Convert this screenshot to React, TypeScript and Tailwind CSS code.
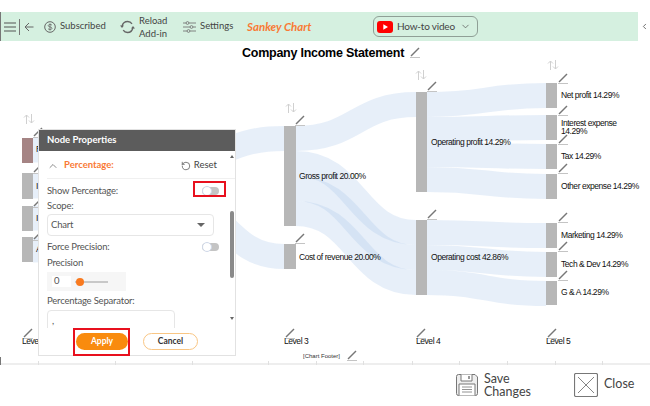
import { ChevronDown, ChevronLeft, ChevronUp, RotateCcw } from "lucide-react";

const CHART_TOP = 41;

const flows = [
  // level 1 -> level 2, mostly under the panel
  [33, 150, 153, 150],
  [33, 186, 153, 176],
  [33, 218, 153, 201],
  [33, 250, 153, 226],
  // level 2 -> level 3
  [165, 163, 284, 138.5],
  [165, 197, 284, 256.5],
  // level 3 -> level 4
  [296, 138.5, 416, 104.5],
  [296, 163.5, 416, 232.5],
  [296, 188.5, 416, 257.5],
  [296, 213.5, 416, 282.5],
  // level 4 -> level 5
  [427, 104.5, 546, 95.5],
  [427, 129.5, 546, 127.5],
  [427, 154.5, 546, 156.5],
  [427, 179.5, 546, 186.5],
  [427, 232.5, 546, 235.5],
  [427, 257.5, 546, 264.5],
  [427, 282.5, 546, 293.5],
];

const nodes = [
  { x: 22, y: 138, w: 11, h: 25, fill: "#a58484" },
  { x: 22, y: 173, w: 11, h: 26, fill: "#b7b7b7" },
  { x: 22, y: 206, w: 11, h: 25, fill: "#b7b7b7" },
  { x: 22, y: 237, w: 11, h: 25, fill: "#b7b7b7" },
  { x: 284, y: 126, w: 12, h: 100, fill: "#b7b7b7" },
  { x: 284, y: 244, w: 12, h: 25, fill: "#b7b7b7" },
  { x: 416, y: 92, w: 11, h: 100, fill: "#b7b7b7" },
  { x: 416, y: 220, w: 11, h: 75, fill: "#b7b7b7" },
  { x: 546, y: 83, w: 11, h: 25, fill: "#b7b7b7" },
  { x: 546, y: 115, w: 11, h: 25, fill: "#b7b7b7" },
  { x: 546, y: 144, w: 11, h: 25, fill: "#b7b7b7" },
  { x: 546, y: 174, w: 11, h: 25, fill: "#b7b7b7" },
  { x: 546, y: 223, w: 11, h: 25, fill: "#b7b7b7" },
  { x: 546, y: 252, w: 11, h: 25, fill: "#b7b7b7" },
  { x: 546, y: 281, w: 11, h: 24, fill: "#b7b7b7" },
];

const pencils = [
  [410, 47], [33, 127], [33, 163], [33, 197], [33, 230],
  [295, 115], [295, 233], [427, 81], [427, 209],
  [558, 73], [558, 105], [558, 134], [558, 163],
  [558, 212], [558, 241], [558, 270],
  [23, 328], [285, 328], [416, 328], [547, 328], [347, 350],
];

const arrows = [[24, 114], [286, 103], [416, 70], [548, 60]];

const labels = [
  { x: 36, y: 149, text: "Revenue" },
  { x: 36, y: 186, text: "Interest" },
  { x: 36, y: 218, text: "Interest" },
  { x: 36, y: 249, text: "Asset" },
  { x: 299, y: 176, text: "Gross profit 20.00%" },
  { x: 299, y: 257, text: "Cost of revenue 20.00%" },
  { x: 431, y: 142, text: "Operating profit 14.29%" },
  { x: 431, y: 257, text: "Operating cost 42.86%" },
  { x: 561, y: 95, text: "Net profit 14.29%" },
  { x: 561, y: 123, text: "Interest expense" },
  { x: 561, y: 131, text: "14.29%" },
  { x: 561, y: 156, text: "Tax 14.29%" },
  { x: 561, y: 186, text: "Other expense 14.29%" },
  { x: 561, y: 235, text: "Marketing 14.29%" },
  { x: 561, y: 264, text: "Tech & Dev 14.29%" },
  { x: 561, y: 292, text: "G & A 14.29%" },
  { x: 22, y: 341, text: "Level 1" },
  { x: 284, y: 341, text: "Level 3" },
  { x: 416, y: 341, text: "Level 4" },
  { x: 546, y: 341, text: "Level 5" },
];

const ticks = [38, 115, 192, 268, 316, 363, 412, 459, 507, 555, 602];

function Toggle() {
  return (
    <div className="relative h-2 w-[17px] rounded-full bg-[#c4c4c4]">
      <div className="absolute -top-px left-0 h-2.5 w-2.5 rounded-full border border-[#cfd8e8] bg-white" />
    </div>
  );
}

function Panel() {
  return (
    <div className="absolute left-[38px] top-[88px] flex h-[227px] w-[198px] flex-col border border-[#e2e2e2] bg-white font-['Lato',sans-serif] text-[9.5px] tracking-[-0.2px] text-[#555]">
      <div className="flex h-[21px] items-center bg-[#5c5c5c] pl-2 text-[9.5px] font-bold tracking-normal text-white">Node Properties</div>
      <div className="relative h-[177px] overflow-hidden pl-2">
        <div className="flex h-[28px] items-center border-b border-[#f0f0f0] pr-[18px] pt-0.5">
          <ChevronUp size={12} strokeWidth={1.5} className="text-[#666]" />
          <span className="ml-[5px] text-[9.5px] font-bold tracking-normal text-[#f97a35]">Percentage:</span>
          <RotateCcw size={10} strokeWidth={1.5} className="ml-auto text-[#333]" />
          <span className="ml-[3px] text-[9.5px] tracking-normal text-[#444]">Reset</span>
        </div>
        <div className="mt-1.5 flex h-3 items-center justify-between pr-4">
          <span>Show Percentage:</span>
          <Toggle />
        </div>
        <div className="mt-[2px] leading-[13px]">Scope:</div>
        <div className="mt-[2px] flex h-[22px] w-[167px] items-center justify-between rounded border border-[#e6e6e6] pl-[3px] pr-2 text-[#555]">
          Chart
          <div className="h-0 w-0 border-x-[4px] border-t-[4px] border-x-transparent border-t-[#666]" />
        </div>
        <div className="mt-[5px] flex h-3 items-center justify-between pr-4">
          <span>Force Precision:</span>
          <Toggle />
        </div>
        <div className="mt-[3px] leading-[13px]">Precision</div>
        <div className="mt-[3px] flex h-[19px] w-[79px] items-center bg-[#f6f6f6] pl-[5px]">
          <div className="flex h-[11px] w-[19px] items-center bg-white pl-0.5">0</div>
          <div className="relative ml-1 h-[2px] w-[33px] bg-[#c8c8c8]">
            <div className="absolute -top-[3px] left-[1px] h-2 w-2 rounded-full bg-[#f97a1f]" />
          </div>
        </div>
        <div className="mt-[3px] leading-[13px]">Percentage Separator:</div>
        <div className="mt-[3px] h-[24px] w-[128px] rounded-t border border-[#e6e6e6] pl-1 pt-1 leading-[12px]">,</div>
        <div className="absolute right-[1px] top-1 h-0 w-0 border-x-[2.5px] border-b-[3px] border-x-transparent border-b-[#666]" />
        <div className="absolute right-[1px] top-[60px] h-[67px] w-1 rounded-full bg-[#8a8a8a]" />
        <div className="absolute right-[1px] top-[166px] h-0 w-0 border-x-[2.5px] border-t-[3px] border-x-transparent border-t-[#666]" />
      </div>
      <div className="flex flex-1 items-start pl-[37px] pt-[5px] text-[8.5px] font-bold tracking-normal">
        <div className="relative flex h-[17px] w-[52px] items-center justify-center rounded-full bg-[#f98b0e] text-white">
          Apply
          <div className="absolute -bottom-[6px] -left-[3px] -right-[2px] -top-[5px] border-2 border-[#e8101e]" />
        </div>
        <div className="ml-[15px] flex h-[17px] w-[55px] items-center justify-center rounded-full border border-[#f9c684] text-[#333]">Cancel</div>
      </div>
    </div>
  );
}

export default function App() {
  return (
    <div className="flex h-[406px] w-[650px] flex-col overflow-hidden bg-white font-['Lato',sans-serif]">
      <div className="mt-3 flex h-[29px] shrink-0">
        <div className="flex w-[638px] items-center border-l border-l-[#777] bg-[#d5f0e0] text-[9.5px] text-[#444]">
          <svg width="12" height="10" viewBox="0 0 12 10" className="ml-[3px]" stroke="#555" strokeWidth="1.2">
            <path d="M0 1h12M0 5h12M0 9h12" />
          </svg>
          <div className="ml-[3px] h-4 w-px bg-[#777]" />
          <svg width="10" height="10" viewBox="0 0 10 10" className="ml-[4px]" fill="none" stroke="#666" strokeWidth="1">
            <path d="M9.5 5H1M5 1 1 5l4 4" />
          </svg>
          <svg width="12" height="12" viewBox="0 0 12 12" className="ml-[10px]" fill="none" stroke="#666">
            <circle cx="6" cy="6" r="5.3" />
            <path d="M8 4.2C7.4 3.3 4.2 3.1 4.2 4.7 4.2 6.4 8 5.5 8 7.3 8 8.9 4.7 8.7 4 7.7M6 2.4v7.2" strokeWidth=".8" />
          </svg>
          <span className="ml-1 w-[46px] whitespace-nowrap">Subscribed</span>
          <svg width="15" height="14" viewBox="0 0 15 14" className="ml-[14px]" fill="none" stroke="#666" strokeWidth="1.3">
            <path d="M2 6.500C2.600 3.500 5 1.500 7.700 1.500c1.800 0 3.400.9 4.300 2.300M13 7.500c-.6 3-3 5-5.500 5-1.800 0-3.400-.9-4.300-2.300" />
            <path d="M0 5.500h4L2 8zM11 8.500h4L13 6z" fill="#666" stroke="none" />
          </svg>
          <div className="ml-1 flex w-[29px] flex-col leading-[13px]">
            <span>Reload</span>
            <span>Add-in</span>
          </div>
          <svg width="13" height="12" viewBox="0 0 13 12" className="ml-[15px]" fill="none" stroke="#777" strokeWidth=".9">
            <path d="M0 2h3M6 2h7M0 6h7M10 6h3M0 10h4M7 10h6" />
            <circle cx="4.500" cy="2" r="1.400" />
            <circle cx="8.500" cy="6" r="1.400" />
            <circle cx="5.500" cy="10" r="1.400" />
          </svg>
          <span className="ml-1 w-[33px] whitespace-nowrap">Settings</span>
          <span className="ml-[14px] w-[64px] whitespace-nowrap text-[11.5px] font-bold italic text-[#f97a35]">Sankey Chart</span>
          <div className="ml-[62px] flex h-[21px] w-[105px] items-center rounded-md border border-[#8f9f96] pl-[3px] text-[10px] tracking-[-0.2px]">
            <svg width="16" height="12" viewBox="0 0 16 12">
              <rect width="16" height="12" rx="3" fill="#f00" />
              <path d="M6.300 3.200v5.600L11 6z" fill="#fff" />
            </svg>
            <span className="ml-[4px] whitespace-nowrap">How-to video</span>
            <ChevronDown size={11} strokeWidth={1.6} className="ml-auto mr-1.5 text-[#555]" />
          </div>
        </div>
        <div className="flex flex-1 items-center pl-[2px]">
          <ChevronLeft size={9} strokeWidth={1.8} className="text-[#333]" />
        </div>
      </div>

      <div className="relative h-[324px] shrink-0 overflow-hidden">
        <svg className="absolute inset-0" width="650" height="324" viewBox="0 41 650 324" fill="none">
          {flows.map(([x1, y1, x2, y2], i) => {
            const mid = (x1 + x2) / 2;
            return (
              <path
                key={i}
                d={`M${x1} ${y1}C${mid} ${y1} ${mid} ${y2} ${x2} ${y2}`}
                stroke="#a9c6ea"
                strokeOpacity=".28"
                strokeWidth="25"
              />
            );
          })}
          {nodes.map((n, i) => (
            <rect key={i} x={n.x} y={n.y} width={n.w} height={n.h} fill={n.fill} />
          ))}
          {pencils.map(([x, y], i) => (
            <g key={i} transform={`translate(${x} ${y})`}>
              <path d="M1 9 9 1" stroke="#777" strokeWidth="1.5" />
              <path d="M0 10.500h10" stroke="#c4c4c4" strokeWidth="1" />
            </g>
          ))}
          {arrows.map(([x, y], i) => (
            <g key={i} transform={`translate(${x} ${y})`} stroke="#d0d0d0" strokeWidth="1">
              <path d="M2.500 10V1M0 3.500 2.500 1 5 3.500" />
              <path d="M7.500 0v9M5 6.500 7.500 9 10 6.500" />
            </g>
          ))}
        </svg>
        {labels.map((l) => (
          <span
            key={l.x + "-" + l.y}
            className="absolute -translate-y-1/2 whitespace-nowrap font-['Liberation_Sans',Arial,sans-serif] text-[8.5px] leading-[10px] tracking-[-0.45px] text-[#111]"
            style={{ left: l.x, top: l.y - CHART_TOP }}
          >
            {l.text}
          </span>
        ))}
        <h1 className="absolute left-[242px] top-[5px] whitespace-nowrap font-['Liberation_Sans',Arial,sans-serif] text-[12.5px] font-bold leading-[15px] tracking-[-0.25px] text-black">
          Company Income Statement
        </h1>
        <span className="absolute left-[303px] top-[311px] whitespace-nowrap font-['Liberation_Sans',Arial,sans-serif] text-[6px] leading-2 text-[#333]">
          [Chart Footer]
        </span>
        <Panel />
        <div className="absolute left-[193px] top-[140px] h-[16px] w-[33px] border-2 border-[#e8101e]" />
        <div className="absolute inset-x-0 bottom-0 h-[2px] bg-[#eeeeee]" />
        {ticks.map((x) => (
          <div key={x} className="absolute bottom-0 h-1 w-px bg-[#e0e0e0]" style={{ left: x }} />
        ))}
        <div className="absolute bottom-0 left-0 h-2 w-px bg-[#777]" />
      </div>

      <div className="flex flex-1 items-center justify-end pb-[2px] pr-4 font-['Lato',sans-serif] text-[12.5px] text-[#444]">
        <svg width="24" height="24" viewBox="0 0 24 24" fill="none" stroke="#777">
          <path d="M1.500 3.500a2 2 0 0 1 2-2H20l2.500 2.500v16.500a2 2 0 0 1-2 2h-17a2 2 0 0 1-2-2z" fill="#eee" />
          <path d="M6 1.500v6.500h11V1.500" fill="#fff" />
          <path d="M13 3h2v3h-2z" fill="#999" stroke="none" />
          <path d="M4 22.500V11h16v11.500" fill="#fff" />
          <path d="M7 14h10M7 16.500h10M7 19h10" strokeWidth=".8" />
        </svg>
        <div className="ml-[5px] flex w-[90px] flex-col leading-[13px]">
          <span>Save</span>
          <span>Changes</span>
        </div>
        <svg width="24" height="24" viewBox="0 0 24 24" fill="none" stroke="#777">
          <rect x=".5" y=".5" width="23" height="23" rx="1.500" strokeWidth="1.200" />
          <path d="M4 4 20 20M20 4 4 20" strokeWidth=".9" />
        </svg>
        <span className="ml-1.5 w-[30px]">Close</span>
      </div>
    </div>
  );
}
